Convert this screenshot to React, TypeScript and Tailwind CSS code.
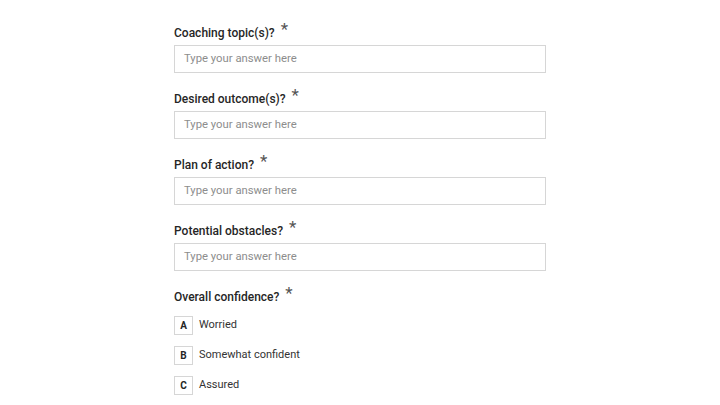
const font = { fontFamily: 'Roboto, "Noto Sans", sans-serif' };

const questions = ['Coaching topic(s)?', 'Desired outcome(s)?', 'Plan of action?', 'Potential obstacles?'];

const options = [
  { key: 'A', label: 'Worried' },
  { key: 'B', label: 'Somewhat confident' },
  { key: 'C', label: 'Assured' },
];

function Label({ text }: { text: string }) {
  return (
    <div className="h-5 whitespace-nowrap text-[12px] font-medium leading-5 text-[#262626]">
      {text}
      <span className="relative -top-[4px] ml-[6px] align-top text-[17px] font-normal text-[#555]">*</span>
    </div>
  );
}

export default function App() {
  return (
    <div className="min-h-[405px] bg-white pt-[23px]" style={font}>
      <div className="mx-auto w-[372px]">
        {questions.map((q) => (
          <div key={q} className="mb-4">
            <Label text={q} />
            <div className="mt-[2px] flex h-[28px] items-center border border-[#d6d6d6] px-[9px] text-[11.3px] text-[#8d8d8d]">
              Type your answer here
            </div>
          </div>
        ))}
        <Label text="Overall confidence?" />
        <div className="mt-[9px] flex flex-col gap-[11px]">
          {options.map((o) => (
            <div key={o.key} className="flex items-center gap-[6px]">
              <div className="flex h-[19px] w-[19px] items-center justify-center border border-[#d6d6d6] text-[10px] font-bold text-[#262626]">
                {o.key}
              </div>
              <span className="text-[11px] text-[#333]">{o.label}</span>
            </div>
          ))}
        </div>
      </div>
    </div>
  );
}
